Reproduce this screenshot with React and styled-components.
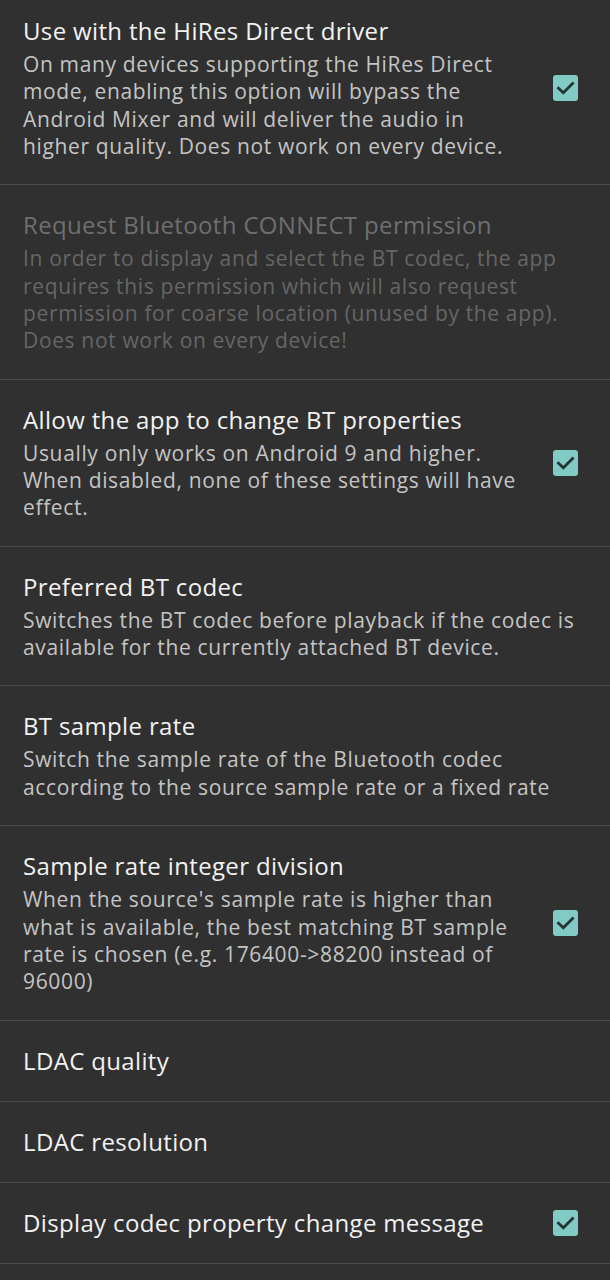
import React from 'react';
import styled, { createGlobalStyle } from 'styled-components';

const GlobalStyle = createGlobalStyle`
	html, body {
		margin: 0;
		padding: 0;
		background: #303030;
	}
	body {
		font-family: 'Open Sans', Roboto, 'Liberation Sans', sans-serif;
		-webkit-font-smoothing: antialiased;
	}
`;

const items = [
	{
		title: 'Use with the HiRes Direct driver',
		summary: [
			'On many devices supporting the HiRes Direct',
			'mode, enabling this option will bypass the',
			'Android Mixer and will deliver the audio in',
			'higher quality. Does not work on every device.',
		],
		checked: true,
	},
	{
		title: 'Request Bluetooth CONNECT permission',
		summary: [
			'In order to display and select the BT codec, the app',
			'requires this permission which will also request',
			'permission for coarse location (unused by the app).',
			'Does not work on every device!',
		],
		disabled: true,
	},
	{
		title: 'Allow the app to change BT properties',
		summary: [
			'Usually only works on Android 9 and higher.',
			'When disabled, none of these settings will have',
			'effect.',
		],
		checked: true,
	},
	{
		title: 'Preferred BT codec',
		summary: [
			'Switches the BT codec before playback if the codec is',
			'available for the currently attached BT device.',
		],
	},
	{
		title: 'BT sample rate',
		summary: [
			'Switch the sample rate of the Bluetooth codec',
			'according to the source sample rate or a fixed rate',
		],
	},
	{
		title: 'Sample rate integer division',
		summary: [
			"When the source's sample rate is higher than",
			'what is available, the best matching BT sample',
			'rate is chosen (e.g. 176400->88200 instead of',
			'96000)',
		],
		checked: true,
	},
	{ title: 'LDAC quality' },
	{ title: 'LDAC resolution' },
	{ title: 'Display codec property change message', checked: true },
];

const CheckBox = () => (
	<Box>
		<svg width="25" height="26" viewBox="0 0 25 26">
			<rect x="0" y="0" width="25" height="26" rx="3" fill="#80cbc4" />
			<path
				d="M5.5 13.2 L10.3 17.8 L19.6 8.4"
				fill="none"
				stroke="#263533"
				strokeWidth="2.8"
				strokeLinecap="square"
			/>
		</svg>
	</Box>
);

export default function App() {
	return (
		<>
			<GlobalStyle />
			<List>
				{items.map(item => (
					<Row key={item.title}>
						<Text>
							<Title disabled={item.disabled}>{item.title}</Title>
							{item.summary && (
								<Summary disabled={item.disabled}>
									{item.summary.map(line => (
										<Line key={line}>{line}</Line>
									))}
								</Summary>
							)}
						</Text>
						{item.checked && <CheckBox />}
					</Row>
				))}
			</List>
		</>
	);
}

const List = styled.div`
	margin-top: -9px;
	background: #303030;
	min-height: 1300px;
`;

const Row = styled.div`
	box-sizing: border-box;
	display: flex;
	align-items: center;
	min-height: 81px;
	padding: 25px 32px 24px 23px;
	border-bottom: 1px solid #4a4a4a;
`;

const Text = styled.div`
	flex: 1;
	min-width: 0;
`;

const Title = styled.div`
	font-size: 24px;
	line-height: 30px;
	letter-spacing: 0.35px;
	color: ${p => (p.disabled ? '#6f6f6f' : '#f2f2f2')};
	white-space: nowrap;
`;

const Summary = styled.div`
	margin-top: 5px;
	font-size: 21px;
	line-height: 27.35px;
	letter-spacing: 0.65px;
	color: ${p => (p.disabled ? '#666666' : '#c4c4c4')};
`;

const Line = styled.div`
	white-space: nowrap;
`;

const Box = styled.div`
	flex: none;
	width: 25px;
	height: 26px;
	margin-left: 8px;
	svg {
		display: block;
	}
`;
